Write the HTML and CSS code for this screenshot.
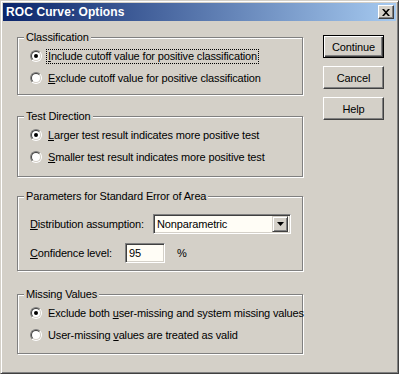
FILE: index.html
```html
<!DOCTYPE html>
<html>
<head>
<meta charset="utf-8">
<link rel="stylesheet" href="styles.css">
</head>
<body>
<div class="window">
  <div class="titlebar">
    <span class="title">ROC Curve: Options</span>
    <span class="close">
      <svg width="8" height="7" viewBox="0 0 8 7"><path d="M0 0h2l2 2.2L6 0h2L5 3.5 8 7H6L4 4.8 2 7H0l3-3.5z" fill="#000"/></svg>
    </span>
  </div>
  <div class="client">
    <div class="main">
      <div class="group g1">
        <span class="legend">Classification</span>
        <div class="row"><span class="radio on"><span class="in"></span></span><span class="lbl focus"><u>I</u>nclude cutoff value for positive classification</span></div>
        <div class="row"><span class="radio"><span class="in"></span></span><span class="lbl"><u>E</u>xclude cutoff value for positive classification</span></div>
      </div>
      <div class="group g2">
        <span class="legend">Test Direction</span>
        <div class="row"><span class="radio on"><span class="in"></span></span><span class="lbl"><u>L</u>arger test result indicates more positive test</span></div>
        <div class="row"><span class="radio"><span class="in"></span></span><span class="lbl"><u>S</u>maller test result indicates more positive test</span></div>
      </div>
      <div class="group g3">
        <span class="legend">Parameters for Standard Error of Area</span>
        <div class="frow f1">
          <span class="flabel"><u>D</u>istribution assumption:</span>
          <span class="select"><span class="sval">Nonparametric</span><span class="dbtn"><svg width="7" height="4" viewBox="0 0 7 4"><path d="M0 0h7L3.5 4z" fill="#000"/></svg></span></span>
        </div>
        <div class="frow f2">
          <span class="flabel short"><u>C</u>onfidence level:</span>
          <span class="input">95</span>
          <span class="pct">%</span>
        </div>
      </div>
      <div class="group g4">
        <span class="legend">Missing Values</span>
        <div class="row"><span class="radio on"><span class="in"></span></span><span class="lbl">Exclude both <u>u</u>ser-missing and system missing values</span></div>
        <div class="row"><span class="radio"><span class="in"></span></span><span class="lbl">User-missing <u>v</u>alues are treated as valid</span></div>
      </div>
    </div>
    <div class="buttons">
      <div class="btn default"><span>Continue</span></div>
      <div class="btn"><span>Cancel</span></div>
      <div class="btn"><span>Help</span></div>
    </div>
  </div>
</div>
</body>
</html>
```

FILE: styles.css
```css
html, body {
  margin: 0;
  padding: 0;
  background: #d4d0c8;
}
body {
  font-family: "Liberation Sans", Arial, sans-serif;
  font-size: 11px;
  letter-spacing: -0.15px;
  color: #000;
  white-space: nowrap;
}
.window {
  width: 399px;
  height: 374px;
  box-sizing: border-box;
  background: #d4d0c8;
  border-style: solid;
  border-width: 1px;
  border-color: #d4d0c8 #404040 #404040 #d4d0c8;
  box-shadow: inset 1px 1px 0 #fff, inset -1px -1px 0 #808080;
  padding: 2px;
  display: flex;
  flex-direction: column;
}
.titlebar {
  height: 18px;
  background: linear-gradient(to right, #0a246a, #a6caf0);
  display: flex;
  align-items: center;
  justify-content: space-between;
  padding: 0 2px 0 2px;
  flex: none;
}
.title {
  color: #fff;
  font-weight: bold;
  font-size: 12px;
  padding-left: 1px;
  letter-spacing: 0.1px;
}
.close {
  width: 16px;
  height: 14px;
  box-sizing: border-box;
  background: #d4d0c8;
  border-style: solid;
  border-width: 1px;
  border-color: #fff #404040 #404040 #fff;
  box-shadow: inset -1px -1px 0 #808080;
  display: flex;
  align-items: center;
  justify-content: center;
  padding-right: 1px;
}
.client {
  display: flex;
  padding: 16px 0 0 14px;
}
.main {
  width: 286px;
  display: flex;
  flex-direction: column;
}
.group {
  position: relative;
  box-sizing: border-box;
  border: 1px solid #808080;
  box-shadow: inset 1px 1px 0 #fff, 1px 1px 0 #fff;
  padding: 7px 0 0 12px;
}
.g1 { height: 58px; }
.g2 { height: 61px; margin-top: 21px; }
.g3 { height: 75px; margin-top: 19px; }
.g4 { height: 60px; margin-top: 23px; }
.legend {
  position: absolute;
  top: -8px;
  left: 6px;
  background: #d4d0c8;
  padding: 0 2px 0 2px;
  line-height: 15px;
}
.row {
  height: 22px;
  display: flex;
  align-items: center;
}
.radio {
  width: 12px;
  height: 12px;
  box-sizing: border-box;
  border-radius: 50%;
  border: 1px solid;
  border-color: #808080 #fff #fff #808080;
  flex: none;
}
.radio .in {
  display: block;
  width: 10px;
  height: 10px;
  box-sizing: border-box;
  border-radius: 50%;
  border: 1px solid;
  border-color: #404040 #d4d0c8 #d4d0c8 #404040;
  background: #fff;
  position: relative;
}
.radio.on .in::after {
  content: "";
  position: absolute;
  left: 2px;
  top: 2px;
  width: 4px;
  height: 4px;
  border-radius: 50%;
  background: #000;
}
.lbl {
  margin-left: 4px;
  line-height: 13px;
  padding: 0 1px;
  border: 1px solid transparent;
}
.lbl.focus {
  border: 1px dotted #000;
}
.frow {
  display: flex;
  align-items: center;
}
.f1 { height: 20px; margin-top: 10px; }
.f2 { height: 20px; margin-top: 9px; }
.flabel {
  width: 123px;
  flex: none;
}
.flabel.short { width: 95px; }
.select {
  width: 138px;
  height: 20px;
  box-sizing: border-box;
  border-style: solid;
  border-width: 1px;
  border-color: #808080 #fff #fff #808080;
  box-shadow: inset 1px 1px 0 #404040, inset -1px -1px 0 #d4d0c8;
  background: #fffdf6;
  display: flex;
  align-items: center;
  justify-content: space-between;
  padding: 2px;
}
.sval {
  padding-left: 1px;
}
.dbtn {
  width: 16px;
  height: 16px;
  box-sizing: border-box;
  background: #d4d0c8;
  border-style: solid;
  border-width: 1px;
  border-color: #d4d0c8 #404040 #404040 #d4d0c8;
  box-shadow: inset 1px 1px 0 #fff, inset -1px -1px 0 #808080;
  display: flex;
  align-items: center;
  justify-content: center;
}
.input {
  width: 40px;
  height: 20px;
  box-sizing: border-box;
  border-style: solid;
  border-width: 1px;
  border-color: #808080 #fff #fff #808080;
  box-shadow: inset 1px 1px 0 #404040, inset -1px -1px 0 #d4d0c8;
  background: #fffdf6;
  padding: 3px 0 0 3px;
  line-height: 13px;
}
.pct {
  margin-left: 12px;
}
.buttons {
  margin-left: 20px;
  margin-top: -2px;
  display: flex;
  flex-direction: column;
  gap: 8px;
}
.btn {
  width: 61px;
  height: 23px;
  box-sizing: border-box;
  border-style: solid;
  border-width: 1px;
  border-color: #fff #404040 #404040 #fff;
  box-shadow: inset -1px -1px 0 #808080;
  display: flex;
  align-items: center;
  justify-content: center;
}
.btn.default {
  border: 1px solid #000;
  box-shadow: inset 1px 1px 0 #fff, inset -1px -1px 0 #404040, inset -2px -2px 0 #808080;
}
```
